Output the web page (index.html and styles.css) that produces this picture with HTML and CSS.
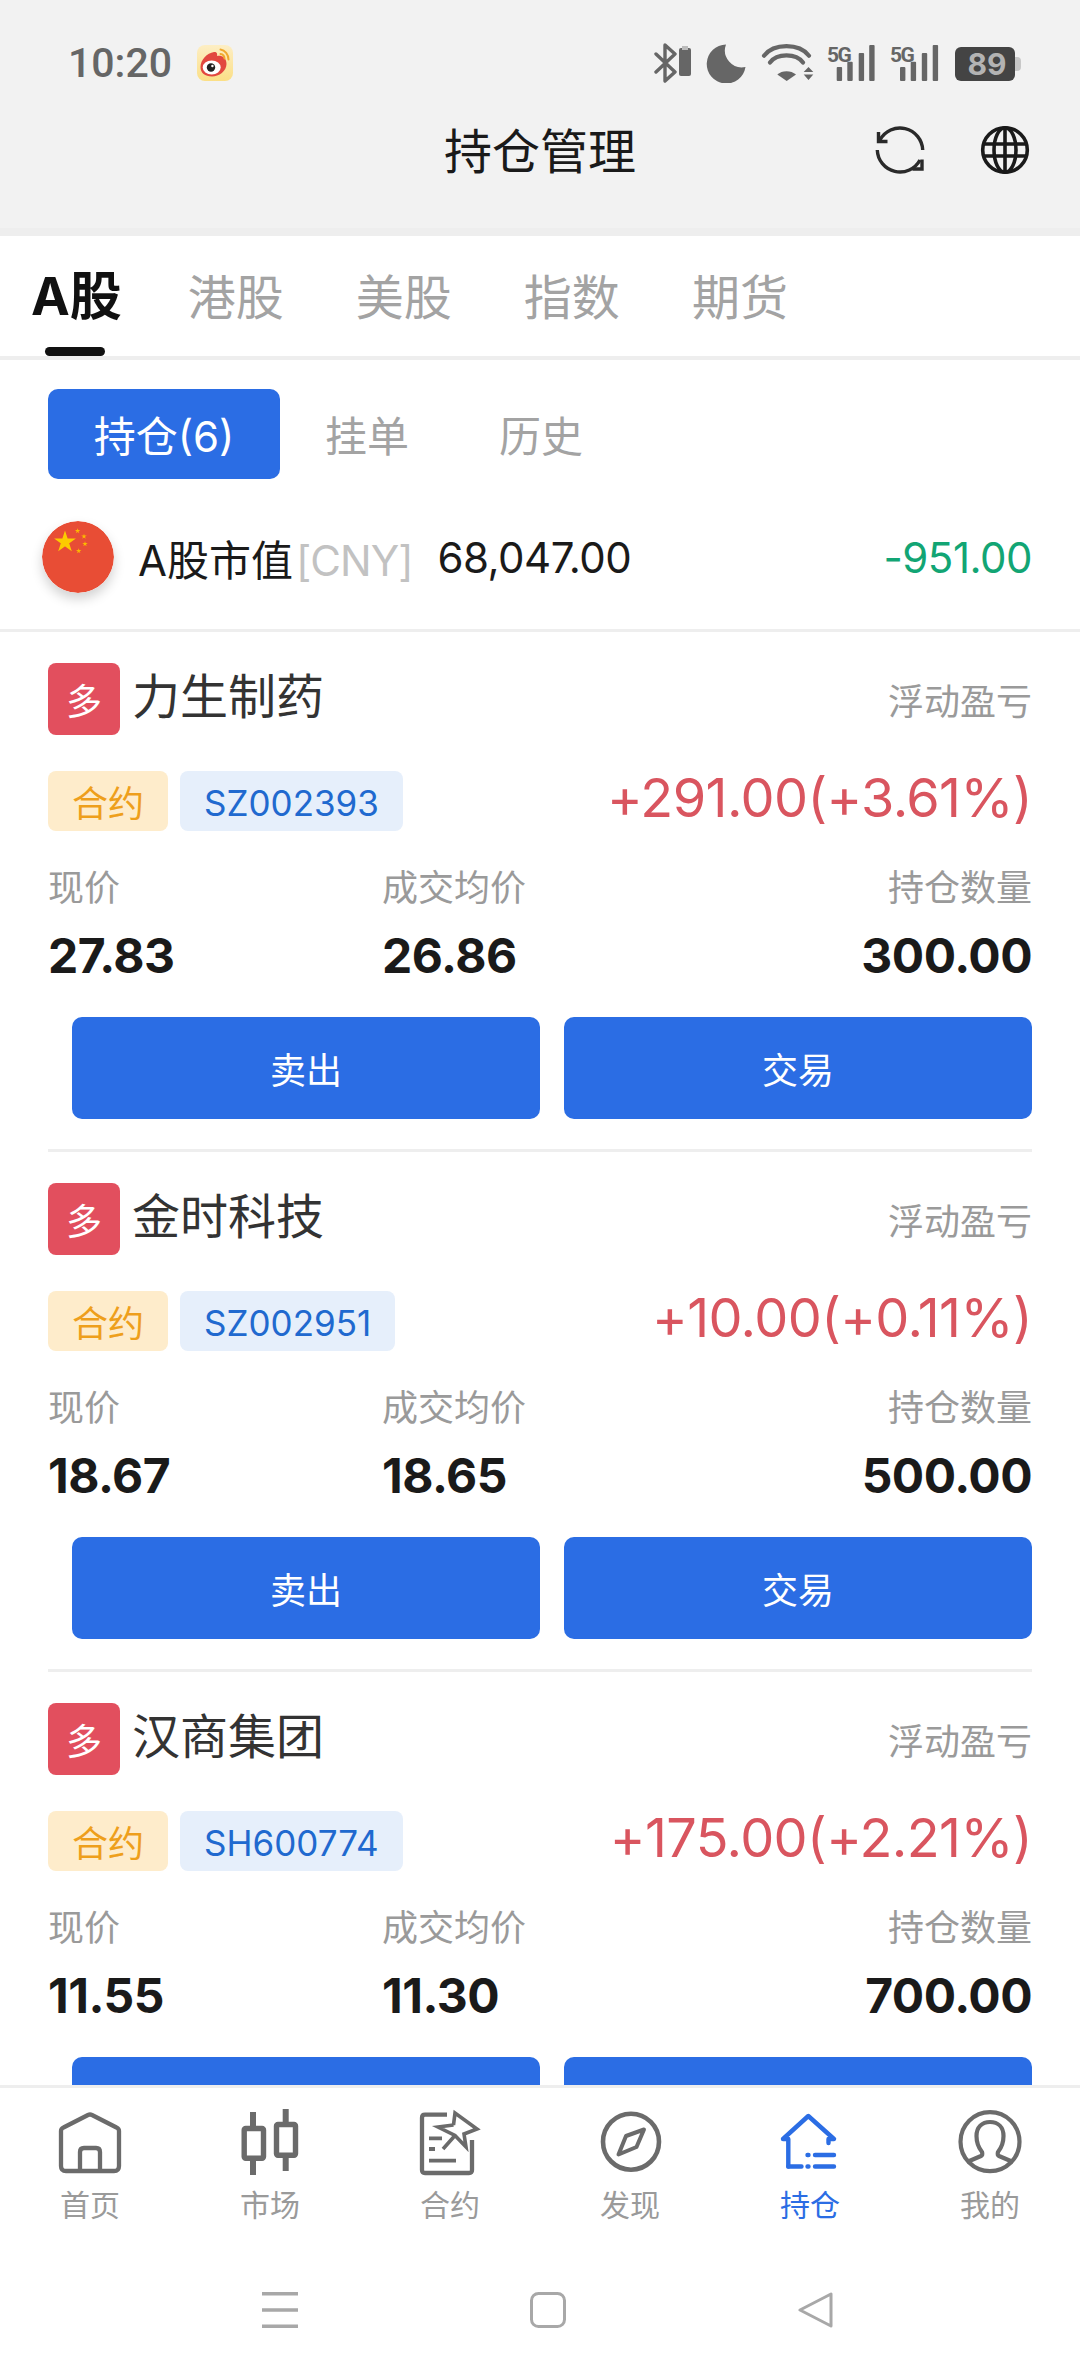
FILE: index.html
```html
<!DOCTYPE html>
<html lang="zh-CN">
<head>
  <meta charset="UTF-8" />
  <meta name="viewport" content="width=device-width, initial-scale=1.0" />
  <title>持仓管理</title>
  <link rel="stylesheet" href="styles.css">
</head>
<body>

<header class="top">
  <div class="status-bar">
    <span class="time">10:20</span>
    <svg class="weibo" width="36" height="36" viewBox="0 0 36 36">
      <defs>
        <linearGradient id="wb" x1="0" y1="0" x2="0" y2="1">
          <stop offset="0" stop-color="#fdeec4" />
          <stop offset="1" stop-color="#fbdf86" />
        </linearGradient>
      </defs>
      <rect width="36" height="36" rx="8" fill="url(#wb)" />
      <path d="M3.5 22 C3.5 15 10 8 17 7 C20 6.5 20.5 9 20 11 C24 10 29.5 12 29.5 19 C29.5 26 22 31.5 15 31.5 C8 31.5 3.5 28 3.5 22 Z" fill="#e2473f" />
      <ellipse cx="14.7" cy="22.5" rx="9" ry="7" fill="#fff" />
      <circle cx="14" cy="22.5" r="4.2" fill="#222" />
      <circle cx="15.4" cy="21" r="1.2" fill="#fff" />
      <path d="M23.5 4.5 C28 5 31.5 9.5 31.5 14.5 M23.5 9 C25.8 9.3 27.4 11.2 27.5 13.5" fill="none" stroke="#f0a92e" stroke-width="2" stroke-linecap="round" />
    </svg>
    <svg class="status-icons" width="367" height="40" viewBox="0 0 367 40">
      <path d="M2 11 L21 29 L11 38 V2 L21 11 L2 29" fill="none" stroke="#666" stroke-width="3.4" stroke-linejoin="round" stroke-linecap="round" />
      <rect x="25" y="5" width="12" height="28" rx="2" fill="#666" />
      <rect x="28" y="3" width="6" height="4" fill="#bbb" />
      <path d="M72 1.5 A19.5 19.5 0 1 0 91.5 24 A17 17 0 0 1 72 1.5 Z" fill="#666" />
      <path d="M110 12.7 C120 0 145 0 155 12.7 M116 19.5 C123 10 142 10 149 19.5" fill="none" stroke="#666" stroke-width="4.2" stroke-linecap="round" />
      <path d="M123.3 31.5 C128 27 137 27 142 31.5 L132.7 38 Z" fill="#666" />
      <path d="M149.7 29 L154.5 24 L159.3 29 Z M149.7 31.5 H159.3 L154.5 37 Z" fill="#666" />
      <text class="net" x="173" y="18.5">5G</text>
      <rect x="182.7" y="24" width="5.4" height="14" rx="1" fill="#666" />
      <rect x="193.3" y="18.7" width="5.4" height="19.3" rx="1" fill="#666" />
      <rect x="204.7" y="10" width="5.4" height="28" rx="1" fill="#666" />
      <rect x="215.2" y="2" width="5.4" height="36" rx="1" fill="#666" />
      <text class="net" x="236" y="18.5">5G</text>
      <rect x="246" y="24" width="5.4" height="14" rx="1" fill="#666" />
      <rect x="256.7" y="18.7" width="5.4" height="19.3" rx="1" fill="#666" />
      <rect x="267.8" y="10" width="5.4" height="28" rx="1" fill="#666" />
      <rect x="278.7" y="2" width="5.4" height="36" rx="1" fill="#666" />
      <rect x="301" y="4" width="60" height="34" rx="6" fill="#444" />
      <path d="M361 14 h2 a4 4 0 0 1 4 4 v6 a4 4 0 0 1 -4 4 h-2 Z" fill="#c8c8c8" />
      <text class="batt" x="333" y="31.5" text-anchor="middle">89</text>
    </svg>
  </div>
  <div class="app-bar">
    <span></span>
    <h1>持仓管理</h1>
    <div class="app-actions">
      <svg width="56" height="56" viewBox="0 0 56 56" fill="none" stroke="#2a2a2a" stroke-width="3.4">
        <path d="M8 18 A22.7 22.7 0 0 1 50.7 28" />
        <path d="M6.5 10 V19.5 H15.5" />
        <path d="M5.3 28 A22.7 22.7 0 0 0 48 38" />
        <path d="M40.5 47 H50 V37.5" />
      </svg>
      <svg width="56" height="56" viewBox="0 0 56 56" fill="none" stroke="#1a1a1a" stroke-width="3.6">
        <circle cx="28" cy="28" r="22.3" />
        <ellipse cx="28" cy="28" rx="11" ry="22.3" />
        <path d="M28 5.7 V50.3 M7 22 H49 M7 34 H49" />
      </svg>
    </div>
  </div>
</header>

<main class="content">
  <nav class="market-tabs">
    <a class="market-tab active">A股<i></i></a>
    <a class="market-tab">港股</a>
    <a class="market-tab">美股</a>
    <a class="market-tab">指数</a>
    <a class="market-tab">期货</a>
  </nav>

  <div class="sub-tabs">
    <a class="sub-tab active">持仓(6)</a>
    <a class="sub-tab">挂单</a>
    <a class="sub-tab">历史</a>
  </div>

  <div class="summary">
    <svg class="flag" width="72" height="72" viewBox="0 0 72 72">
      <defs>
        <polygon id="star" points="0,-11.5 6.8,9.3 -10.9,-3.6 10.9,-3.6 -6.8,9.3" />
      </defs>
      <circle cx="36" cy="36" r="36" fill="#e84d35" />
      <use href="#star" transform="translate(23 21)" fill="#fccb00" />
      <use href="#star" transform="translate(35.6 10) scale(.25)" fill="#fcb900" />
      <use href="#star" transform="translate(42 15.5) scale(.25)" fill="#fcb900" />
      <use href="#star" transform="translate(43 23) scale(.25)" fill="#fcb900" />
      <use href="#star" transform="translate(36.7 30) scale(.25)" fill="#fcb900" />
    </svg>
    <span class="summary-label">A股市值<em>[CNY]</em></span>
    <span class="summary-value">68,047.00</span>
    <span class="summary-change">-951.00</span>
  </div>

  <section class="position">
    <div class="pos-head">
      <span class="dir">多</span>
      <span class="pos-name">力生制药</span>
      <span class="muted">浮动盈亏</span>
    </div>
    <div class="pos-tags">
      <span class="tag tag-type">合约</span>
      <span class="tag tag-code">SZ002393</span>
      <span class="pnl">+291.00(+3.61%)</span>
    </div>
    <div class="stats">
      <span class="muted">现价</span>
      <span class="muted">成交均价</span>
      <span class="muted">持仓数量</span>
      <b>27.83</b>
      <b>26.86</b>
      <b>300.00</b>
    </div>
    <div class="actions">
      <a class="btn">卖出</a>
      <a class="btn">交易</a>
    </div>
  </section>

  <section class="position">
    <div class="pos-head">
      <span class="dir">多</span>
      <span class="pos-name">金时科技</span>
      <span class="muted">浮动盈亏</span>
    </div>
    <div class="pos-tags">
      <span class="tag tag-type">合约</span>
      <span class="tag tag-code">SZ002951</span>
      <span class="pnl">+10.00(+0.11%)</span>
    </div>
    <div class="stats">
      <span class="muted">现价</span>
      <span class="muted">成交均价</span>
      <span class="muted">持仓数量</span>
      <b>18.67</b>
      <b>18.65</b>
      <b>500.00</b>
    </div>
    <div class="actions">
      <a class="btn">卖出</a>
      <a class="btn">交易</a>
    </div>
  </section>

  <section class="position">
    <div class="pos-head">
      <span class="dir">多</span>
      <span class="pos-name">汉商集团</span>
      <span class="muted">浮动盈亏</span>
    </div>
    <div class="pos-tags">
      <span class="tag tag-type">合约</span>
      <span class="tag tag-code">SH600774</span>
      <span class="pnl">+175.00(+2.21%)</span>
    </div>
    <div class="stats">
      <span class="muted">现价</span>
      <span class="muted">成交均价</span>
      <span class="muted">持仓数量</span>
      <b>11.55</b>
      <b>11.30</b>
      <b>700.00</b>
    </div>
    <div class="actions">
      <a class="btn"></a>
      <a class="btn"></a>
    </div>
  </section>
</main>

<footer class="bottom">
  <nav class="tabbar">
    <a class="tabbar-item">
      <svg width="72" height="72" viewBox="0 0 72 72" fill="none" stroke="#6b6b6b" stroke-width="4.3" stroke-linejoin="round">
        <path d="M7 25 Q7 22.5 9.5 21.5 L34 9 Q36 8 38 9 L62.5 21.5 Q65 22.5 65 25 V60 Q65 65 60 65 H12 Q7 65 7 60 Z" />
        <path d="M26 65 V46 Q26 42 30 42 H42 Q46 42 46 46 V65" />
      </svg>
      首页
    </a>
    <a class="tabbar-item">
      <svg width="72" height="72" viewBox="0 0 72 72" fill="none" stroke="#6b6b6b" stroke-width="5.4" stroke-linejoin="round">
        <path d="M19 6 V22 M19 52 V69 M51.7 3 V18 M51.7 49 V65" stroke-width="6" />
        <rect x="10.2" y="22.5" width="19.3" height="29.7" rx="1.5" />
        <rect x="42.5" y="18.5" width="19" height="30.7" rx="1.5" />
      </svg>
      市场
    </a>
    <a class="tabbar-item">
      <svg width="72" height="72" viewBox="0 0 72 72" fill="none" stroke="#6b6b6b" stroke-width="4.3">
        <path d="M33 8.7 H11 Q8 8.7 8 11.7 V64 Q8 67 11 67 H55 Q58 67 58 64 V34" />
        <path d="M15 32.3 H28 M15 43 H21 M15 54.7 H42" stroke-width="3.8" />
        <path d="M39.5 19 L41 7 L63 23 L50 28 L52 41 L41 29.5 L24 21 L39.5 19 M41 29.5 L29 43" stroke-width="3.6" stroke-linejoin="miter" />
      </svg>
      合约
    </a>
    <a class="tabbar-item">
      <svg width="72" height="72" viewBox="0 0 72 72" fill="none" stroke="#6b6b6b" stroke-width="4.6" stroke-linejoin="round">
        <circle cx="37" cy="35.7" r="28" />
        <path d="M50 23.5 L32 30 L24.5 48.5 L42.5 41 Z" stroke-width="4" />
      </svg>
      发现
    </a>
    <a class="tabbar-item active">
      <svg width="72" height="72" viewBox="0 0 72 72" fill="none" stroke="#2b6de4" stroke-width="4.4" stroke-linecap="round" stroke-linejoin="round">
        <path d="M14.3 60.5 V33 H9 L34.3 10 L60 33 H54.5 V37" />
        <path d="M14.3 60.5 H27.5 M41 49 H60 M41 60.5 H60 M33.5 49 H34.5 M33.5 60.5 H34.5" />
      </svg>
      持仓
    </a>
    <a class="tabbar-item">
      <svg width="72" height="72" viewBox="0 0 72 72" fill="none" stroke="#6b6b6b" stroke-width="4.2" stroke-linejoin="round">
        <circle cx="36" cy="35.7" r="29.5" />
        <path d="M13 56 L27 50 Q29 49 28 46 C24 41 22.5 37 22.5 30 C22.5 21 28 16 36 16 C44 16 49.5 21 49.5 30 C49.5 37 48 41 44 46 Q43 49 45 50 L59 56" />
      </svg>
      我的
    </a>
  </nav>
  <div class="sys-nav">
    <svg width="36" height="36" viewBox="0 0 36 36" fill="none" stroke="#a8a8a8" stroke-width="3.4">
      <path d="M0 1.7 H36 M0 18 H36 M0 34.3 H36" />
    </svg>
    <svg width="36" height="36" viewBox="0 0 36 36" fill="none" stroke="#a8a8a8" stroke-width="3">
      <rect x="1.5" y="1.5" width="33" height="33" rx="7" />
    </svg>
    <svg width="36" height="36" viewBox="0 0 36 36" fill="none" stroke="#a8a8a8" stroke-width="3" stroke-linejoin="round">
      <path d="M33 2 V34 L2 18 Z" />
    </svg>
  </div>
</footer>

</body>
</html>
```

FILE: styles.css
```css
* {
  box-sizing: border-box;
}

body {
  margin: 0;
  width: 1080px;
  height: 2376px;
  display: flex;
  flex-direction: column;
  overflow: hidden;
  background: #fff;
  color: #1a1a1a;
  font-family: Inter, "Noto Sans CJK SC", sans-serif;
}

svg {
  display: block;
  flex-shrink: 0;
}

/* top bar */
.top {
  flex-shrink: 0;
  height: 236px;
  background: #f2f2f2;
  border-bottom: 8px solid #eee;
}

.status-bar {
  display: flex;
  align-items: center;
  height: 96px;
  padding: 30px 59px 0 68px;
}

.time {
  font-family: Roboto, sans-serif;
  font-size: 41px;
  font-weight: 500;
  color: #666;
}

.weibo {
  margin-left: 25px;
}

.status-icons {
  margin-left: auto;
}

.net {
  font-family: Roboto, sans-serif;
  font-size: 21px;
  font-weight: 700;
  letter-spacing: -1.5px;
  fill: #666;
}

.batt {
  font-family: Inter, sans-serif;
  font-size: 30px;
  font-weight: 700;
  fill: #b3b3b3;
}

.app-bar {
  display: grid;
  grid-template-columns: 1fr auto 1fr;
  align-items: center;
  height: 108px;
  padding: 0 47px;
}

.app-bar h1 {
  margin: 3px 0 0;
  font-size: 48px;
  font-weight: 400;
  line-height: 60px;
  color: #1a1a1a;
}

.app-actions {
  display: flex;
  justify-content: flex-end;
  gap: 49px;
}

/* content */
.content {
  flex: 1;
  min-height: 0;
  overflow: hidden;
}

.market-tabs {
  display: flex;
  align-items: baseline;
  gap: 72px;
  height: 124px;
  padding: 28px 0 0 31px;
  border-bottom: 4px solid #eee;
}

.market-tab {
  position: relative;
  font-size: 48px;
  line-height: 66px;
  color: #a3a3a3;
}

.market-tab.active {
  margin-right: -6px;
  font-size: 52px;
  font-weight: 700;
  color: #111;
}

.market-tab.active i {
  position: absolute;
  left: 14px;
  top: 83px;
  width: 60px;
  height: 9px;
  border-radius: 5px;
  background: #111;
}

.sub-tabs {
  display: flex;
  align-items: center;
  margin-top: 29px;
  padding-left: 48px;
}

.sub-tab {
  display: flex;
  align-items: center;
  justify-content: center;
  width: 174px;
  height: 90px;
  padding-bottom: 2px;
  border-radius: 10px;
  font-size: 42px;
  color: #a3a3a3;
}

.sub-tab.active {
  width: 232px;
  background: #2b6de4;
  color: #fff;
}

.summary {
  display: flex;
  align-items: center;
  height: 153px;
  padding: 6px 48px 0 42px;
  border-bottom: 3px solid #eee;
}

.flag {
  border-radius: 50%;
  box-shadow: 0 6px 12px rgba(0, 0, 0, 0.18);
}

.summary-label {
  margin-left: 24px;
  font-size: 42px;
}

.summary-label em {
  margin-left: 3px;
  font-style: normal;
  letter-spacing: -1px;
  color: #c2c2c2;
}

.summary-value {
  margin-left: 25px;
  font-size: 42px;
  letter-spacing: -0.5px;
}

.summary-change {
  margin-left: auto;
  font-size: 42px;
  letter-spacing: -0.5px;
  color: #12a574;
}

/* position card */
.position {
  margin: 0 48px;
  padding: 31px 0 30px;
  border-bottom: 3px solid #eee;
}

.pos-head {
  display: flex;
  align-items: center;
  height: 72px;
}

.dir {
  display: flex;
  align-items: center;
  justify-content: center;
  width: 72px;
  height: 72px;
  border-radius: 8px;
  background: #e24f5e;
  color: #fff;
  font-size: 36px;
}

.pos-name {
  margin-left: 12px;
  margin-top: -12px;
  font-size: 48px;
  color: #333;
}

.muted {
  font-size: 36px;
  line-height: 46px;
  color: #9a9a9a;
}

.pos-head .muted {
  margin-left: auto;
  margin-top: 6px;
}

.pos-tags {
  display: flex;
  align-items: center;
  gap: 12px;
  height: 60px;
  margin-top: 36px;
}

.tag {
  display: flex;
  align-items: center;
  justify-content: center;
  height: 60px;
  border-radius: 8px;
  font-size: 36px;
}

.tag-type {
  width: 120px;
  background: #feeccb;
  color: #ee9f1c;
}

.tag-code {
  padding: 3px 24px 0;
  font-size: 35px;
  background: #e6effb;
  color: #2069cf;
}

.pnl {
  margin-left: auto;
  margin-top: -8px;
  font-size: 54px;
  letter-spacing: -0.6px;
  color: #d9555f;
}

.stats {
  display: grid;
  grid-template-columns: 334px 1fr auto;
  margin-top: 34px;
}

.stats :nth-child(3n) {
  text-align: right;
}

.stats b {
  margin-top: 15px;
  font-size: 48px;
  font-weight: 700;
  letter-spacing: -0.5px;
  line-height: 60px;
  color: #1a1a1a;
}

.actions {
  display: grid;
  grid-template-columns: 1fr 1fr;
  gap: 24px;
  margin: 31px 0 0 24px;
}

.btn {
  display: flex;
  align-items: center;
  justify-content: center;
  height: 102px;
  border-radius: 10px;
  background: #2b6de4;
  color: #fff;
  font-size: 36px;
}

/* bottom */
.bottom {
  flex-shrink: 0;
  height: 291px;
  border-top: 3px solid #eee;
  background: #fff;
}

.tabbar {
  display: grid;
  grid-template-columns: repeat(6, 1fr);
  padding-top: 18px;
}

.tabbar-item {
  display: flex;
  flex-direction: column;
  align-items: center;
  font-size: 30px;
  line-height: 40px;
  color: #9a9a9a;
}

.tabbar-item svg {
  margin-bottom: 7px;
}

.tabbar-item.active {
  color: #2b6de4;
}

.sys-nav {
  display: flex;
  gap: 232px;
  margin-top: 67px;
  padding-left: 262px;
}
```
